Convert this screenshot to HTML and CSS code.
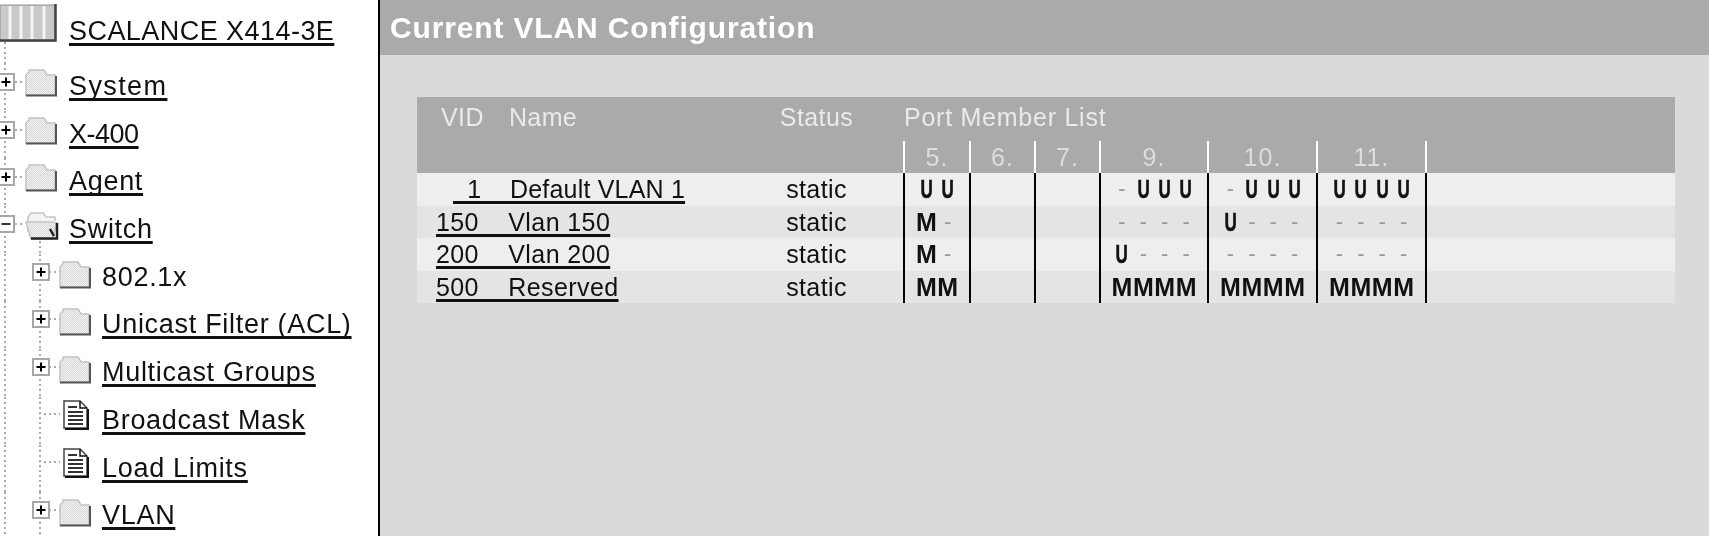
FILE: index.html
```html
<!DOCTYPE html>
<html lang="en">
<head>
  <meta charset="UTF-8">
  <title>Current VLAN Configuration</title>
  <link rel="stylesheet" href="styles.css">
</head>
<body>

  <!-- Shared tree icons -->
  <svg class="icon-defs" aria-hidden="true">
    <defs>
      <pattern id="dither" width="2" height="2" patternUnits="userSpaceOnUse">
        <rect width="2" height="2" fill="#f2f2f2"/>
        <rect width="1" height="1" fill="#d8d8d8"/>
        <rect x="1" y="1" width="1" height="1" fill="#d8d8d8"/>
      </pattern>
      <symbol id="folder" viewBox="0 0 32 28">
        <path d="M1 26V6l3-3V1h15l3 5h8v20z" fill="url(#dither)" stroke="#c4c4c4" stroke-width="1.5"/>
        <path d="M1 26.500h30V7" fill="none" stroke="#555" stroke-width="2"/>
      </symbol>
      <symbol id="folder-open" viewBox="0 0 34 28">
        <path d="M3 20V5l3-4h12l3 4h9v4" fill="#f4f4f4" stroke="#c4c4c4" stroke-width="1.5"/>
        <path d="M1 10h26l5 1-5 16H6z" fill="url(#dither)" stroke="#c4c4c4" stroke-width="1.5"/>
        <path d="M6 26.500h26V11M25 17l4 7" fill="none" stroke="#222" stroke-width="2.500"/>
      </symbol>
      <symbol id="doc" viewBox="0 0 26 30">
        <path d="M1 1h16l7 7v20H1z" fill="#fff" stroke="#444" stroke-width="1.500"/>
        <path d="M17 1v7h7" fill="none" stroke="#111" stroke-width="1.500"/>
        <path d="M5 7h9M5 12h15M5 16h15M5 20h15M5 24h15" stroke="#333" stroke-width="2"/>
        <path d="M2 29h23V9" fill="none" stroke="#111" stroke-width="2"/>
      </symbol>
      <symbol id="box" viewBox="0 0 18 18">
        <rect x="1" y="1" width="16" height="16" fill="#fff" stroke="#a8a8a8" stroke-width="2"/>
        <path d="M4.500 9h9M9 4.500v9" stroke="#000" stroke-width="2"/>
      </symbol>
      <symbol id="box-minus" viewBox="0 0 18 18">
        <rect x="1" y="1" width="16" height="16" fill="#fff" stroke="#a8a8a8" stroke-width="2"/>
        <path d="M4.500 9h9" stroke="#333" stroke-width="2"/>
      </symbol>

      <symbol id="top-closed" viewBox="0 0 68 48">
        <path class="dots" d="M5 0v48M15 19h10"/>
        <use href="#box" x="-3" y="10" width="18" height="18"/>
        <use href="#folder" x="25" y="6" width="32" height="28"/>
      </symbol>
      <symbol id="top-open" viewBox="0 0 68 48">
        <path class="dots" d="M5 0v48M15 18h10M40 30v18"/>
        <use href="#box-minus" x="-3" y="9" width="18" height="18"/>
        <use href="#folder-open" x="25" y="6" width="34" height="28"/>
      </symbol>
      <symbol id="sub-closed" viewBox="0 0 102 48">
        <path class="dots" d="M5 0v48M40 0v48M49 18h11"/>
        <use href="#box" x="32" y="9" width="18" height="18"/>
        <use href="#folder" x="59" y="7" width="32" height="28"/>
      </symbol>
      <symbol id="sub-doc" viewBox="0 0 102 48">
        <path class="dots" d="M5 0v48M40 0v48M44 17h16"/>
        <use href="#doc" x="63" y="3" width="26" height="30"/>
      </symbol>
    </defs>
  </svg>

  <!-- Menu tree -->
  <nav class="tree">
    <div class="tree-root">
      <svg class="root-icon" viewBox="0 0 57 63" aria-hidden="true">
        <path class="dots" d="M5 42v21"/>
        <rect x="0" y="5" width="55" height="36" fill="#c9c9c9" stroke="#8f8f8f" stroke-width="1"/>
        <path d="M10 6v33M21 6v33M32 6v33M44 6v33" stroke="#f4f4f4" stroke-width="3"/>
        <path d="M0 40.500h55.500V4" fill="none" stroke="#444" stroke-width="2.500"/>
      </svg>
      <a href="#" class="tree-title">SCALANCE X414-3E</a>
    </div>
    <div class="tree-row"><svg class="gutter"><use href="#top-closed"/></svg><a href="#" class="wide">System</a></div>
    <div class="tree-row"><svg class="gutter"><use href="#top-closed"/></svg><a href="#" class="narrow">X-400</a></div>
    <div class="tree-row"><svg class="gutter"><use href="#top-closed"/></svg><a href="#">Agent</a></div>
    <div class="tree-row"><svg class="gutter"><use href="#top-open"/></svg><a href="#">Switch</a></div>
    <div class="tree-row sub"><svg class="gutter"><use href="#sub-closed"/></svg><a href="#" class="plain">802.1x</a></div>
    <div class="tree-row sub"><svg class="gutter"><use href="#sub-closed"/></svg><a href="#">Unicast Filter (ACL)</a></div>
    <div class="tree-row sub"><svg class="gutter"><use href="#sub-closed"/></svg><a href="#">Multicast Groups</a></div>
    <div class="tree-row sub"><svg class="gutter"><use href="#sub-doc"/></svg><a href="#">Broadcast Mask</a></div>
    <div class="tree-row sub"><svg class="gutter"><use href="#sub-doc"/></svg><a href="#">Load Limits</a></div>
    <div class="tree-row sub"><svg class="gutter"><use href="#sub-closed"/></svg><a href="#">VLAN</a></div>
  </nav>

  <!-- Content -->
  <main class="content">
    <h1 class="page-title">Current VLAN Configuration</h1>

    <table class="vlan-table">
      <colgroup>
        <col class="col-vlan"><col class="col-status">
        <col class="col-port-a"><col class="col-port-b"><col class="col-port-b">
        <col class="col-wide-a"><col class="col-wide-b"><col class="col-wide-b">
        <col>
      </colgroup>
      <thead>
        <tr class="head-top">
          <th class="vlan-head"><span class="head-vid">VID</span><span class="head-name">Name</span></th>
          <th class="status">Status</th>
          <th class="port-title" colspan="7">Port Member List</th>
        </tr>
        <tr class="head-ports">
          <th></th><th></th>
          <th class="port">5.</th><th class="port">6.</th><th class="port">7.</th>
          <th class="port">9.</th><th class="port">10.</th><th class="port">11.</th>
          <th class="port"></th>
        </tr>
      </thead>
      <tbody>
        <tr>
          <td><a href="#" class="vlan-link first">&nbsp;&nbsp;1&nbsp;&nbsp;&nbsp;&nbsp;Default VLAN 1</a></td>
          <td class="status">static</td>
          <td class="port"><i class="u">U</i><i class="u">U</i></td>
          <td class="port"></td>
          <td class="port"></td>
          <td class="port"><i class="d">-</i><i class="u">U</i><i class="u">U</i><i class="u">U</i></td>
          <td class="port"><i class="d">-</i><i class="u">U</i><i class="u">U</i><i class="u">U</i></td>
          <td class="port"><i class="u">U</i><i class="u">U</i><i class="u">U</i><i class="u">U</i></td>
          <td class="port"></td>
        </tr>
        <tr>
          <td><a href="#" class="vlan-link">150&nbsp;&nbsp;&nbsp;&nbsp;Vlan 150</a></td>
          <td class="status">static</td>
          <td class="port"><i class="m">M</i><i class="d">-</i></td>
          <td class="port"></td>
          <td class="port"></td>
          <td class="port"><i class="d">-</i><i class="d">-</i><i class="d">-</i><i class="d">-</i></td>
          <td class="port"><i class="u">U</i><i class="d">-</i><i class="d">-</i><i class="d">-</i></td>
          <td class="port"><i class="d">-</i><i class="d">-</i><i class="d">-</i><i class="d">-</i></td>
          <td class="port"></td>
        </tr>
        <tr>
          <td><a href="#" class="vlan-link">200&nbsp;&nbsp;&nbsp;&nbsp;Vlan 200</a></td>
          <td class="status">static</td>
          <td class="port"><i class="m">M</i><i class="d">-</i></td>
          <td class="port"></td>
          <td class="port"></td>
          <td class="port"><i class="u">U</i><i class="d">-</i><i class="d">-</i><i class="d">-</i></td>
          <td class="port"><i class="d">-</i><i class="d">-</i><i class="d">-</i><i class="d">-</i></td>
          <td class="port"><i class="d">-</i><i class="d">-</i><i class="d">-</i><i class="d">-</i></td>
          <td class="port"></td>
        </tr>
        <tr>
          <td><a href="#" class="vlan-link">500&nbsp;&nbsp;&nbsp;&nbsp;Reserved</a></td>
          <td class="status">static</td>
          <td class="port"><i class="m">M</i><i class="m">M</i></td>
          <td class="port"></td>
          <td class="port"></td>
          <td class="port"><i class="m">M</i><i class="m">M</i><i class="m">M</i><i class="m">M</i></td>
          <td class="port"><i class="m">M</i><i class="m">M</i><i class="m">M</i><i class="m">M</i></td>
          <td class="port"><i class="m">M</i><i class="m">M</i><i class="m">M</i><i class="m">M</i></td>
          <td class="port"></td>
        </tr>
      </tbody>
    </table>
  </main>

</body>
</html>
```

FILE: styles.css
```css
/* Page */
html, body {
  height: 100%;
}
body {
  margin: 0;
  display: flex;
  overflow: hidden;
  background: #fff;
  color: #111;
  font-family: "Liberation Sans", Arial, sans-serif;
}
a {
  color: #111;
  text-decoration: underline;
  text-decoration-thickness: 3px;
  text-underline-offset: 3px;
  text-decoration-skip-ink: none;
}
.icon-defs {
  position: absolute;
  width: 0;
  height: 0;
}
.dots {
  fill: none;
  stroke: #aaa;
  stroke-width: 2;
  stroke-dasharray: 2 3;
}

/* Menu tree */
.tree {
  flex: none;
  width: 378px;
  height: 100%;
  overflow: hidden;
  border-right: 2px solid #000;
  filter: blur(0.35px);
}
.tree-root {
  display: flex;
  height: 63px;
}
.root-icon {
  flex: none;
  width: 57px;
  height: 63px;
  margin-right: 12px;
}
.tree-title {
  font-size: 27px;
  line-height: 30px;
  padding-top: 16px;
  letter-spacing: 0.45px;
}
.tree-row {
  display: flex;
  height: 47.7px;
  font-size: 27px;
  line-height: 30px;
  letter-spacing: 0.7px;
}
.tree-row a {
  padding-top: 8px;
  height: 30px;
}
.tree-row a.plain {
  text-decoration: none;
}
.tree-row a.wide {
  letter-spacing: 1.4px;
}
.tree-row a.narrow {
  letter-spacing: -0.5px;
}
.gutter {
  flex: none;
  width: 68px;
  height: 48px;
  margin-right: 1px;
}
.sub .gutter {
  width: 102px;
  margin-right: 0;
}

/* Content */
.content {
  flex: 1;
  min-width: 0;
  background: #dadada;
  filter: blur(0.35px);
}
.page-title {
  margin: 0;
  height: 55px;
  padding-left: 10px;
  background: #aaa;
  color: #fff;
  font-size: 30px;
  line-height: 55px;
  letter-spacing: 0.85px;
}

/* VLAN table */
.vlan-table {
  width: 1258px;
  margin: 42px 0 0 37px;
  border-collapse: separate;
  border-spacing: 0;
  table-layout: fixed;
  font-size: 25px;
  letter-spacing: 0.4px;
}
.col-vlan { width: 316px; }
.col-status { width: 170px; }
.col-port-a { width: 66px; }
.col-port-b { width: 65px; }
.col-wide-a { width: 108px; }
.col-wide-b { width: 109px; }

.vlan-table th {
  padding: 0;
  background: #aaa;
  color: #eaeaea;
  font-weight: normal;
  text-align: left;
}
.head-top th {
  height: 39px;
  line-height: 24px;
  padding-bottom: 5px;
}
.head-ports th {
  height: 32px;
}
.head-vid {
  margin-left: 24px;
}
.head-name {
  margin-left: 25px;
}
.vlan-table .port-title {
  padding-left: 1px;
  letter-spacing: 0.75px;
}
.vlan-table .status {
  text-align: center;
  padding-right: 3px;
}
.vlan-table td {
  height: 32.6px;
  padding: 0;
  line-height: 26px;
  vertical-align: middle;
  white-space: nowrap;
}
.vlan-table td:first-child {
  padding-left: 19px;
}
tbody tr:nth-child(odd) td {
  background: #eee;
}
tbody tr:nth-child(even) td {
  background: #e4e4e4;
}
.vlan-link.first {
  margin-left: 17px;
  letter-spacing: 0.2px;
}

/* Port columns */
.vlan-table .port {
  border-left: 2px solid #000;
  text-align: center;
  letter-spacing: 0;
  font-size: 0;
  line-height: 0;
}
.vlan-table th.port {
  border-left-color: #fff;
  color: #ddd;
  font-size: 25px;
  letter-spacing: 1px;
  line-height: 28px;
}
.port i {
  display: inline-block;
  width: 21.4px;
  font-size: 25px;
  font-style: normal;
  line-height: 26px;
  text-align: center;
  vertical-align: middle;
}
.port .m {
  font-weight: bold;
}
.port .u {
  font-weight: bold;
  transform: scaleX(0.68);
  -webkit-text-stroke: 0.6px #111;
}
.port .d {
  color: #999;
  font-size: 22px;
}
```
